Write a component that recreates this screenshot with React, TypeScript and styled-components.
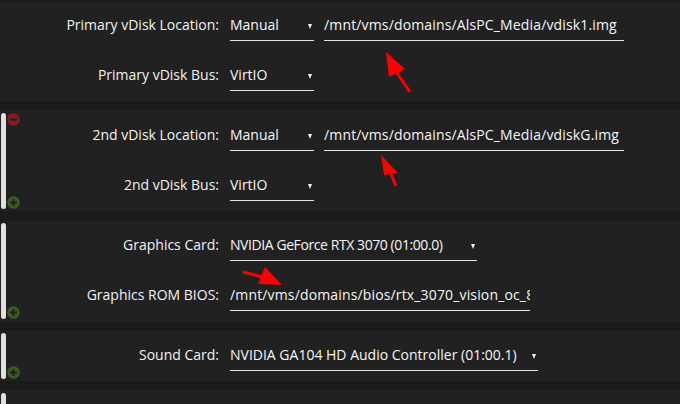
import React from "react";
import styled, { createGlobalStyle } from "styled-components";

const Global = createGlobalStyle`
  html, body { margin: 0; padding: 0; background: #1b1b1b; }
  body { font-family: "Open Sans", "Noto Sans", sans-serif; }
  * { box-sizing: border-box; }
`;

const Page = styled.div`
  position: relative;
  width: 680px;
  height: 404px;
  overflow: hidden;
  padding-top: 1px;
  display: flex;
  flex-direction: column;
  gap: 10px;
  background: #1b1b1b;
`;

const Section = styled.section`
  display: flex;
  background: #212121;
  flex-shrink: 0;
`;

const Gutter = styled.div`
  display: flex;
  width: 20px;
  padding: 2px 0 2px 1px;
  flex-shrink: 0;
`;

const Bar = styled.div<{ $show: boolean }>`
  width: 5px;
  border-radius: 3px;
  background: ${(p) => (p.$show ? "#e1e1e1" : "transparent")};
`;

const IconCol = styled.div<{ $bottomOnly?: boolean }>`
  display: flex;
  flex-direction: column;
  justify-content: ${(p) => (p.$bottomOnly ? "flex-end" : "space-between")};
  margin-left: 1px;
  width: 13px;
`;

const Body = styled.div`
  display: flex;
  flex-direction: column;
  flex: 1;
`;

const Row = styled.div`
  display: flex;
  align-items: flex-start;
  height: 50px;
  padding-top: 10px;
`;

const Label = styled.div`
  width: 199px;
  height: 30px;
  line-height: 27px;
  text-align: right;
  color: #f2f2f2;
  font-size: 14px;
  white-space: nowrap;
  margin-right: 11px;
`;

const Controls = styled.div`
  display: flex;
  gap: 10px;
`;

const SelectBox = styled.div<{ $w: number; $tight?: boolean }>`
  width: ${(p) => p.$w}px;
  height: 30px;
  display: flex;
  align-items: center;
  justify-content: space-between;
  gap: 4px;
  border-bottom: 1px solid #e4e4e4;
  color: #f6f6f6;
  font-size: 14px;
  line-height: 27px;
  padding: 0 2px 2px 0;
  white-space: nowrap;
  letter-spacing: ${(p) => (p.$tight ? "-0.42px" : "0")};
  overflow: hidden;
`;

const Caret = styled.span`
  width: 0;
  height: 0;
  border-left: 2.5px solid transparent;
  border-right: 2.5px solid transparent;
  border-top: 5px solid #f0f0f0;
  margin-top: 3px;
  flex-shrink: 0;
`;

const TextInput = styled.input<{ $w: number }>`
  width: ${(p) => p.$w}px;
  height: 30px;
  background: transparent;
  border: none;
  border-bottom: 1px solid #e4e4e4;
  outline: none;
  padding: 0 0 2px 0;
  color: #f6f6f6;
  font-family: "Open Sans", "Noto Sans", sans-serif;
  font-size: 14px;
  letter-spacing: 0.15px;
`;

const Overlay = styled.svg`
  position: absolute;
  left: 0;
  top: 0;
  pointer-events: none;
`;

const CircleIcon = ({ kind }: { kind: "minus" | "plus" }) => (
  <svg width="13" height="13" viewBox="0 0 13 13">
    <circle cx="6.5" cy="6.5" r="6.3" fill={kind === "minus" ? "#861a22" : "#3b5b1f"} />
    <rect x="3" y="5.5" width="7" height="2" fill="#1f1f1f" />
    {kind === "plus" && <rect x="5.5" y="3" width="2" height="7" fill="#1f1f1f" />}
  </svg>
);

const Select = ({ value, w, tight }: { value: string; w: number; tight?: boolean }) => (
  <SelectBox $w={w} $tight={tight}>
    <span>{value}</span>
    <Caret />
  </SelectBox>
);

type Deco = { bar: boolean; minus?: boolean; plus?: boolean };

const Side = ({ bar, minus, plus }: Deco) => (
  <Gutter>
    <Bar $show={bar} />
    <IconCol $bottomOnly={!minus}>
      {minus && <CircleIcon kind="minus" />}
      {plus && <CircleIcon kind="plus" />}
    </IconCol>
  </Gutter>
);

export default function App() {
  return (
    <>
      <Global />
      <Page>
        <Section>
          <Side bar={false} />
          <Body>
            <Row>
              <Label>Primary vDisk Location:</Label>
              <Controls>
                <Select value="Manual" w={84} />
                <TextInput $w={300} readOnly defaultValue="/mnt/vms/domains/AlsPC_Media/vdisk1.img" />
              </Controls>
            </Row>
            <Row>
              <Label>Primary vDisk Bus:</Label>
              <Controls>
                <Select value="VirtIO" w={84} />
              </Controls>
            </Row>
          </Body>
        </Section>
        <Section>
          <Side bar minus plus />
          <Body>
            <Row>
              <Label>2nd vDisk Location:</Label>
              <Controls>
                <Select value="Manual" w={84} />
                <TextInput $w={300} readOnly defaultValue="/mnt/vms/domains/AlsPC_Media/vdiskG.img" />
              </Controls>
            </Row>
            <Row>
              <Label>2nd vDisk Bus:</Label>
              <Controls>
                <Select value="VirtIO" w={84} />
              </Controls>
            </Row>
          </Body>
        </Section>
        <Section>
          <Side bar plus />
          <Body>
            <Row>
              <Label>Graphics Card:</Label>
              <Controls>
                <Select value="NVIDIA GeForce RTX 3070 (01:00.0)" w={247} tight />
              </Controls>
            </Row>
            <Row>
              <Label>Graphics ROM BIOS:</Label>
              <Controls>
                <TextInput $w={300} readOnly defaultValue="/mnt/vms/domains/bios/rtx_3070_vision_oc_8g.rom" />
              </Controls>
            </Row>
          </Body>
        </Section>
        <Section>
          <Side bar plus />
          <Body>
            <Row>
              <Label>Sound Card:</Label>
              <Controls>
                <Select value="NVIDIA GA104 HD Audio Controller (01:00.1)" w={308} />
              </Controls>
            </Row>
          </Body>
        </Section>
        <Section>
          <Side bar />
          <Body>
            <Row />
          </Body>
        </Section>
        <Overlay width="680" height="404" viewBox="0 0 680 404">
          <g fill="#ff0000" stroke="#ff0000" strokeLinecap="butt">
            <line x1="397" y1="73" x2="410" y2="92" strokeWidth="3" />
            <polygon points="386,52 389,77 405,69" stroke="none" />
            <line x1="391" y1="174" x2="396" y2="186" strokeWidth="3" />
            <polygon points="381,155 384,175 398,173" stroke="none" />
            <line x1="243" y1="272" x2="262" y2="277" strokeWidth="3" />
            <polygon points="282,285 265,267 258,284" stroke="none" />
          </g>
        </Overlay>
      </Page>
    </>
  );
}
